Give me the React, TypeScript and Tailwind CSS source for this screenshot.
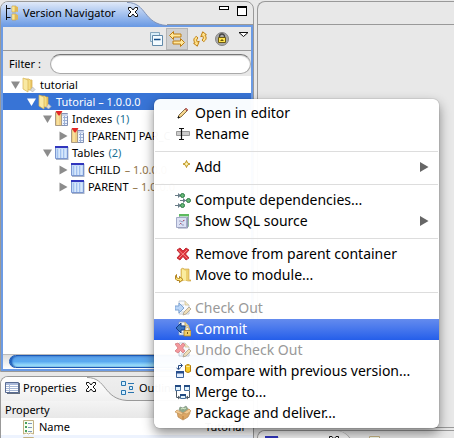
import React from "react";

type IconProps = { className?: string };

function Svg({ children, className = "", size = 16 }: { children: React.ReactNode; className?: string; size?: number }) {
  return (
    <svg width={size} height={size} viewBox="0 0 16 16" fill="none" aria-hidden="true" className={"shrink-0 " + className}>
      {children}
    </svg>
  );
}

const NavigatorIcon = () => (
  <Svg>
    <path d="M1.5 0v15M1.5 3.500h4M1.500 12.500h4" stroke="#111" />
    <path d="M7 1h4v6H7zM7 9h4v6H7z" fill="#f3d774" stroke="#c39a3c" strokeWidth=".6" />
    <path d="M10 1l3 1v5l-3-1zM10 9l3 1v5l-3-1z" fill="#dfb758" />
    <path d="M8 1.500v5M8 9.500v5" stroke="#fff3b8" />
  </Svg>
);

const CloseIcon = ({ className = "" }: IconProps) => (
  <svg width="12" height="12" viewBox="0 0 12 12" aria-hidden="true" className={"shrink-0 " + className}>
    <path d="M1.500 1.500h2.500l2 2.500 2-2.500h2.500v2L8 6l2.500 2.500v2H8L6 8l-2 2.500H1.500v-2L4 6 1.500 3.500z" fill="#fff" stroke="#111" />
  </svg>
);

const FolderIcon = () => (
  <Svg>
    <path d="M2 2h5l1 1h2v10H7l-5-1z" fill="#f5dd83" stroke="#d2a744" strokeWidth=".7" />
    <path d="M1 1l5 2v12l-5-3z" fill="#f9e9a3" stroke="#dab655" strokeWidth=".7" />
    <path d="M8.500 3H10v9H8.500z" fill="#e3bc5a" />
    <path d="M10.500 10l2.500 2.500-2.500 2.500L8.500 13z" fill="#dcdcdc" stroke="#b5b5b5" strokeWidth=".7" />
  </Svg>
);

const TableIcon = () => (
  <Svg>
    <path d="M2 2h12.500v13H2z" fill="#aab4c8" />
    <path d="M1.500 1.500h12v12h-12z" fill="#c3daf8" stroke="#7b96cf" />
    <path d="M1 1h13v2H1z" fill="#3136bd" />
    <path d="M4 4v9M7 4v9M10 4v9" stroke="#7fa8e6" />
    <path d="M5 4v9M8 4v9M11 4v9" stroke="#eef6ff" />
  </Svg>
);

const IndexIcon = () => (
  <Svg>
    <path d="M7 2.500h6.500v12H7z" fill="#edf3fb" stroke="#8492b5" />
    <path d="M7 3h7v2H7z" fill="#c9d3ea" />
    <path d="M9 6.500h4M9 9.500h4M9 12.500h4M10.500 5v9" stroke="#9cb0d6" />
    <path d="M1.500 1.500h6v13h-6z" fill="#efcf86" stroke="#a99a84" />
    <path d="M4 4v10" stroke="#fff0b2" />
    <path d="M1.500 0h7L5.500 4.500h-1z" fill="#e52626" />
  </Svg>
);

const PencilIcon = () => (
  <Svg>
    <path d="M3 13l1-3 6-6 2 2-6 6z" fill="#efc97b" stroke="#6c5530" strokeWidth=".8" />
    <path d="M10 4l1-1 2 2-1 1z" fill="#d95e58" stroke="#913e3e" strokeWidth=".6" />
    <path d="M3 13l.5-1.500 1 1z" fill="#111" stroke="#111" />
    <path d="M5 10.500l6-6" stroke="#fff1ba" strokeWidth=".8" />
  </Svg>
);

const RenameIcon = () => (
  <Svg>
    <path d="M1.500 5.500h13v4h-13z" fill="#ccc" stroke="#999" />
    <path d="M4 2.500h2M9 2.500H6.500v11H9M4 13.500h2.500" stroke="#111" strokeWidth="1.200" />
  </Svg>
);

const AddIcon = () => (
  <Svg>
    <path d="M11.500 1.500L12.500 4l2.500 1-2.500 1-1 2.500-1-2.500L8 5l2.500-1z" fill="#fff7b0" stroke="#b88a14" strokeWidth=".9" />
  </Svg>
);

const DependenciesIcon = () => (
  <Svg>
    <path d="M0 3.500h9M0 13.500h9M5 8.500h6" stroke="#697d88" />
    <path d="M3 1l3 2.500L3 6zM3 11l3 2.500L3 16zM8 6l3 2.500L8 11z" fill="#667b86" />
    <circle cx="7.500" cy="3.500" r="2" fill="#67b878" stroke="#2b7944" />
    <circle cx="7.500" cy="13.500" r="2" fill="#67b878" stroke="#2b7944" />
    <circle cx="13.500" cy="8.500" r="2" fill="#67b878" stroke="#2b7944" />
  </Svg>
);

const SqlIcon = () => (
  <Svg>
    <path d="M4.500 1.500h9v12h-9z" fill="#b7d9c4" stroke="#8fb9a2" />
    <path d="M4 1h10v2H4z" fill="#5dbb5f" />
    <path d="M1.500 4.500h10v10h-10z" fill="#dce1f4" stroke="#a3aac8" />
    <path d="M12.500 4v11H3" stroke="#9299b5" />
    <path d="M4 8h2l1 1 3-2M4 12l2-2 1 2h2" stroke="#8b91b5" strokeWidth=".8" />
    <path d="M8 7h1v1H8zM5 10h1v1H5z" fill="#bd5365" />
  </Svg>
);

const RemoveIcon = () => (
  <Svg>
    <path d="M2 4l3-2 3 3 3-3 3 2-3.500 4L14 12l-3 2-3-3.500L5 14l-3-2 3.500-4z" fill="#df3038" stroke="#b31722" strokeWidth=".8" />
    <path d="M3.500 4l9 8.500M12 4l-8 8" stroke="#f58683" />
  </Svg>
);

const MoveIcon = () => (
  <Svg>
    <path d="M6 2l2-1 1 1h5v11h2v1h-3l-3-1-4 1z" fill="#edd06f" stroke="#cba03d" strokeWidth=".6" />
    <path d="M7 2l4 2v10l-4-1z" fill="#faec9f" />
    <path d="M1.500 7.500v3l2 1H4.500v-2l3.500 3-3.500 3v-2H2L.5 12V9z" fill="#ffe778" stroke="#ad7b14" strokeWidth=".9" />
  </Svg>
);

function DocBase() {
  return (
    <>
      <path d="M4 1h6l4 4v9H4z" fill="#f6f8fc" stroke="#8697b3" strokeWidth=".8" />
      <path d="M10 1v4h4" fill="#ead99f" stroke="#b69a52" strokeWidth=".8" />
      <path d="M6 5h3M6 12h5" stroke="#a4b5d0" />
    </>
  );
}

const CheckOutIcon = () => (
  <Svg className="opacity-60">
    <DocBase />
    <path d="M0 6h4V3l5 5-5 5v-3H0z" fill="#8ebcf4" stroke="#2868b7" />
    <path d="M8 15l1-3 5-5 2 2-5 5z" fill="#e9ca8c" stroke="#76613d" strokeWidth=".8" />
  </Svg>
);

const CommitIcon = () => (
  <Svg>
    <DocBase />
    <path d="M10 5H6V2L1 7l5 5V9h4z" fill="#3974c1" stroke="#143c87" />
    <path d="M10.500 10V8.500a2 2 0 0 1 4 0V10" stroke="#d9bb72" strokeWidth="1.200" />
    <path d="M9 9.500h7V15H9z" fill="#f1cd68" stroke="#a67b22" strokeWidth=".8" />
    <path d="M12.500 11v2" stroke="#735519" />
  </Svg>
);

const UndoIcon = () => (
  <Svg className="opacity-60">
    <DocBase />
    <path d="M0 2l3-1 2.500 2.500L8 1l2 2-2.500 3L10 9l-2 2-2.500-2.500L3 11 0 9l3-3z" fill="#ed555c" stroke="#b52630" strokeWidth=".8" />
    <path d="M8 15l1-3 5-5 2 2-5 5z" fill="#e9ca8c" stroke="#76613d" strokeWidth=".8" />
  </Svg>
);

const CompareIcon = () => (
  <Svg>
    <path d="M3.500 6V2.500H7M5.500 .5l2 2-2 2M1.500 5l2 1.500 2-1.500" stroke="#234781" />
    <path d="M1.500 8.500h7v6h-7z" fill="#e3efff" stroke="#3c6298" />
    <path d="M1 8h8v2.500H1z" fill="#264d8d" />
    <path d="M10.500 2.500v6q2.500 2 5 0v-6q-2.500-2-5 0" fill="#f7c928" stroke="#b47e0a" />
    <path d="M11 3q2 1.500 4 0" stroke="#fff0a0" />
  </Svg>
);

const MergeIcon = () => (
  <Svg>
    <path d="M.5 1.500h5v5h-5zM9.500 1.500h5v5h-5zM5.500 10.500h5v4h-5z" fill="#e1f2fb" stroke="#466d9b" />
    <path d="M0 1h6v2H0zM9 1h6v2H9zM5 10h6v2H5z" fill="#234b83" />
    <path d="M1.500 7v6.500h3M14.500 7v6.500H12M3 12l2 1.500L3 15M13 12l-2 1.500L13 15" stroke="#4b5865" />
  </Svg>
);

const PackageIcon = () => (
  <Svg>
    <path d="M2 6l6 2 6-4 1 4-2 4-5 3-5-3z" fill="#dda765" stroke="#b5844c" strokeWidth=".7" />
    <path d="M4 5l1-3 3 1 3-2 2 3-5 4z" fill="#8fa98b" stroke="#839582" strokeWidth=".7" />
    <path d="M6 4l2-1 1 1 2-1" stroke="#d6e9c8" />
    <path d="M2 5L0 7l7 3 1-2 4 1 4-3-2-2-6 4z" fill="#f1ca92" stroke="#c4955a" strokeWidth=".7" />
    <path d="M8 11v3" stroke="#b77c3d" />
  </Svg>
);

const CollapseIcon = () => (
  <Svg>
    <path d="M2.500 1.500h9v9h-9z" fill="#d8edf8" stroke="#86a7bd" />
    <path d="M4.500 4.500h10v10h-10z" fill="#f3fbff" stroke="#6189a8" />
    <path d="M6 8.500h6.500" stroke="#124b86" strokeWidth="1.500" />
  </Svg>
);

const LinkIcon = () => (
  <Svg>
    <path d="M.5 4.500L4.500.5v2.500H12v3H4.500v2.500zM15.500 11.500l-4-4V10H4v3h7.500v2.500z" fill="#ffe79a" stroke="#bd7d13" />
  </Svg>
);

const RefreshIcon = () => (
  <Svg>
    <path d="M9 8.500c2-.5 2.500-2 2-3.500L9 5l3.500-4L15 5h-1.500c1 3-.5 5-3.500 5.500z" transform="rotate(-20 11 6)" fill="#ffe28a" stroke="#bd7d13" strokeWidth=".9" />
    <path d="M7 7.500c-2 .5-2.500 2-2 3.500l2 0-3.500 4L1 11h1.500c-1-3 .5-5 3.500-5.500z" transform="rotate(-20 5 10)" fill="#ffe28a" stroke="#bd7d13" strokeWidth=".9" />
  </Svg>
);

const LockIcon = () => (
  <Svg>
    <circle cx="8" cy="8" r="6.500" fill="#a8a8a8" stroke="#858585" />
    <path d="M5.500 7V5.500a2.500 2.500 0 0 1 5 0V7" stroke="#444" strokeWidth="1.300" />
    <path d="M4.500 6.500h7v5h-7z" fill="#ffe34e" stroke="#6c5b14" />
    <path d="M8 8v2M6.500 9.500h3" stroke="#65530c" />
  </Svg>
);

const PropertiesIcon = () => (
  <Svg>
    <path d="M2 3h13v11H2z" fill="#666f7f" />
    <path d="M.5 2.500h13v10H.5z" fill="#fff" stroke="#596c93" />
    <path d="M1 3h12v2H1z" fill="#a9b9da" />
    <path d="M1 6.500h12M1 8.500h12M1 10.500h12M4.500 5v7" stroke="#a7b8d7" />
  </Svg>
);

const OutlineIcon = () => (
  <Svg>
    <path d="M.5 1.500h4v4h-4zM.5 10.500h4v4h-4zM8.500 6.500h3v3h-3z" fill="#d6f0ff" stroke="#2874ae" />
    <path d="M7 3.500h6M7 12.500h6" stroke="#2874ae" />
  </Svg>
);

const PropertyIcon = () => (
  <Svg>
    <path d="M2.500 1.500h10v13.500l-3-1-2 1-2-1-3 1z" fill="#f7fff5" stroke="#c3b183" />
    <path d="M4 3h2v2H4zM4 7h2v2H4zM4 11h2v2H4z" fill="#4ba05d" />
    <path d="M7 4.500h4M7 8.500h4M7 12.500h4" stroke="#8296bd" />
  </Svg>
);

function TabCurve({ id, from, to, line }: { id: string; from: string; to: string; line: string }) {
  return (
    <svg width="40" height="24" viewBox="0 0 40 24" aria-hidden="true" className="shrink-0">
      <defs>
        <linearGradient id={id} x2="0" y2="1">
          <stop stopColor={from} />
          <stop offset="1" stopColor={to} />
        </linearGradient>
      </defs>
      <path d="M0 0C20 0 16 22 40 23.500V24H0z" fill={"url(#" + id + ")"} />
      <path d="M0 .5C20 .5 16 22 40 23.500" fill="none" stroke={line} />
    </svg>
  );
}

type Row = {
  label: string;
  suffix?: string;
  tone?: string;
  pad: string;
  open: boolean;
  icon: React.ReactNode;
  selected?: boolean;
};

const rows: Row[] = [
  { label: "tutorial", pad: "pl-2", open: true, icon: <FolderIcon /> },
  { label: "Tutorial – 1.0.0.0", pad: "pl-6", open: true, icon: <FolderIcon />, selected: true },
  { label: "Indexes", suffix: "(1)", tone: "text-[#1c7195]", pad: "pl-10", open: true, icon: <IndexIcon /> },
  { label: "[PARENT] PAR_C", pad: "pl-14", open: false, icon: <IndexIcon /> },
  { label: "Tables", suffix: "(2)", tone: "text-[#1c7195]", pad: "pl-10", open: true, icon: <TableIcon /> },
  { label: "CHILD", suffix: "– 1.0.0.0", tone: "text-[#917448]", pad: "pl-14", open: false, icon: <TableIcon /> },
  { label: "PARENT", suffix: "– 1.0.0.0", tone: "text-[#917448]", pad: "pl-14", open: false, icon: <TableIcon /> },
];

function Twisty({ open, selected }: { open: boolean; selected?: boolean }) {
  return (
    <svg width="9" height="10" viewBox="0 0 9 10" aria-hidden="true" className="shrink-0">
      <path d={open ? "M0 1.500h9L4.500 9z" : "M.5 0.500v9L8.500 5z"} fill={selected ? "#fff" : "#8c8c8c"} />
    </svg>
  );
}

function TreeRow({ row }: { row: Row }) {
  return (
    <li
      role="treeitem"
      aria-selected={!!row.selected}
      className={"flex h-[17px] items-center whitespace-nowrap " + row.pad + (row.selected ? " bg-[#3874d6] text-white" : "")}
    >
      <Twisty open={row.open} selected={row.selected} />
      <span className="ml-0.5 flex">{row.icon}</span>
      <span className="ml-0.5">{row.label}</span>
      {row.suffix && <span className={"ml-1 " + row.tone}>{row.suffix}</span>}
    </li>
  );
}

function Navigator() {
  return (
    <section aria-label="Version Navigator" className="flex min-h-0 flex-1 flex-col overflow-hidden rounded-t-lg border border-[#999]">
      <header className="flex h-[25px] shrink-0 items-start border-b-2 border-[#6c9be4]">
        <div className="flex h-6 w-[126px] shrink-0 items-center whitespace-nowrap bg-linear-to-b from-[#e0e9f8] to-[#6c9be4] pb-0.5 pl-1">
          <NavigatorIcon />
          <h2 className="ml-0.5">Version Navigator</h2>
        </div>
        <div className="relative flex">
          <TabCurve id="navTab" from="#e0e9f8" to="#6c9be4" line="#8294b8" />
          <button type="button" aria-label="Close Version Navigator" className="absolute left-0 top-1">
            <CloseIcon />
          </button>
        </div>
        <div className="flex h-[23px] flex-1 items-start justify-end gap-2 border-b border-[#999] pr-1.5 pt-1">
          <button type="button" aria-label="Minimize" className="h-1 w-2.5 border border-black bg-white" />
          <button type="button" aria-label="Maximize" className="h-2.5 w-2.5 border border-t-2 border-black bg-white" />
        </div>
      </header>
      <div className="flex min-h-0 flex-1 flex-col border-2 border-t-0 border-[#6c9be4]">
        <div className="flex h-6 shrink-0 items-center justify-end border-b border-[#999] pr-0.5">
          <button type="button" aria-label="Collapse all" className="mr-0.5">
            <CollapseIcon />
          </button>
          <button type="button" aria-label="Link with editor" aria-pressed="true" className="border border-[#b5b5b5] bg-[#d0d0d0] px-0.5 py-0.5">
            <LinkIcon />
          </button>
          <button type="button" aria-label="Refresh" className="ml-1">
            <RefreshIcon />
          </button>
          <button type="button" aria-label="Lock" className="ml-1.5">
            <LockIcon />
          </button>
          <button type="button" aria-label="View menu" className="mb-2 ml-2">
            <svg width="11" height="7" viewBox="0 0 11 7" aria-hidden="true">
              <path d="M1 1.500h9L5.500 5.500z" fill="#fff" stroke="#111" />
            </svg>
          </button>
        </div>
        <div className="flex h-[25px] shrink-0 items-center">
          <label htmlFor="filter" className="w-[47px] shrink-0 whitespace-nowrap pl-1.5">
            Filter :
          </label>
          <input
            id="filter"
            type="text"
            className="h-5 min-w-0 flex-1 rounded-full border border-[#aaa] border-t-[#777] bg-white px-2 shadow-[inset_0_1px_1px_#ccc] outline-none"
          />
        </div>
        <ul role="tree" aria-label="Versions" className="min-h-0 flex-1 overflow-hidden bg-white">
          {rows.map((row) => (
            <TreeRow key={row.label} row={row} />
          ))}
        </ul>
        <div className="flex h-[15px] shrink-0 border-t border-[#bbb] bg-linear-to-b from-[#ddd] to-white pl-1.5">
          <div className="h-[13px] w-[218px] rounded-full border border-[#1b58b4] bg-linear-to-b from-[#5b9fe8] via-[#5aaaf0] to-[#b5f4ff] shadow-[inset_2px_0_2px_#1b58b4]" />
        </div>
      </div>
    </section>
  );
}

function Properties() {
  return (
    <section aria-label="Properties" className="h-[62px] shrink-0 overflow-hidden rounded-tl-lg border border-b-0 border-[#999]">
      <header className="flex h-6 items-center whitespace-nowrap bg-linear-to-b from-[#eee] to-[#e8e8e8]">
        <div className="flex h-6 w-[86px] shrink-0 items-center bg-linear-to-b from-white to-[#f0f0f0] pb-0.5 pl-1">
          <PropertiesIcon />
          <h2 className="ml-0.5">Properties</h2>
        </div>
        <div className="relative flex">
          <TabCurve id="propTab" from="#ffffff" to="#f0f0f0" line="#999" />
          <button type="button" aria-label="Close Properties" className="absolute -left-0.5 top-1">
            <CloseIcon />
          </button>
        </div>
        <div className="flex h-6 flex-1 items-center gap-0.5 border-b border-[#999] pb-0.5">
          <span className="-ml-1.5 flex">
            <OutlineIcon />
          </span>
          Outline
        </div>
      </header>
      <table className="w-full table-fixed border-collapse text-left">
        <thead className="bg-linear-to-b from-[#f4f4f4] to-[#e8e8e8]">
          <tr className="h-[17px]">
            <th className="w-[200px] p-0 pl-1 font-normal">Property</th>
            <td className="p-0" />
          </tr>
        </thead>
        <tbody className="bg-white">
          <tr className="h-[17px]">
            <td className="p-0 pl-5">
              <span className="flex items-center gap-0.5">
                <PropertyIcon />
                Name
              </span>
            </td>
            <td className="p-0 pl-1">Tutorial</td>
          </tr>
          <tr className="h-[17px] bg-[#edf3fe]">
            <td className="p-0 pl-5">
              <PropertyIcon />
            </td>
            <td />
          </tr>
        </tbody>
      </table>
    </section>
  );
}

type Item = { label: string; icon: React.ReactNode; sub?: boolean; disabled?: boolean; active?: boolean };

const groups: Item[][] = [
  [
    { label: "Open in editor", icon: <PencilIcon /> },
    { label: "Rename", icon: <RenameIcon /> },
  ],
  [{ label: "Add", icon: <AddIcon />, sub: true }],
  [
    { label: "Compute dependencies...", icon: <DependenciesIcon /> },
    { label: "Show SQL source", icon: <SqlIcon />, sub: true },
  ],
  [
    { label: "Remove from parent container", icon: <RemoveIcon /> },
    { label: "Move to module...", icon: <MoveIcon /> },
  ],
  [
    { label: "Check Out", icon: <CheckOutIcon />, disabled: true },
    { label: "Commit", icon: <CommitIcon />, active: true },
    { label: "Undo Check Out", icon: <UndoIcon />, disabled: true },
    { label: "Compare with previous version...", icon: <CompareIcon /> },
    { label: "Merge to...", icon: <MergeIcon /> },
    { label: "Package and deliver...", icon: <PackageIcon /> },
  ],
];

function MenuItem({ item }: { item: Item }) {
  const tone = item.active
    ? " bg-linear-to-b from-[#648bee] to-[#245eea] text-white"
    : item.disabled
      ? " text-[#999]"
      : " text-black";
  return (
    <button
      type="button"
      role="menuitem"
      disabled={item.disabled}
      className={"flex h-[21px] w-full items-center whitespace-nowrap pb-0.5 pl-[21px] pr-2.5 text-left" + tone}
    >
      {item.icon}
      <span className="ml-1 flex-1">{item.label}</span>
      {item.sub && (
        <svg width="9" height="10" viewBox="0 0 9 10" aria-hidden="true">
          <path d="M0 0v10l8.500-5z" fill="#666" />
        </svg>
      )}
    </button>
  );
}

function ContextMenu() {
  return (
    <div
      role="menu"
      aria-label="Version actions"
      className="absolute left-[154px] top-[99px] w-[285px] rounded-md bg-white/97 py-1 font-['Noto_Sans','Open_Sans',sans-serif] text-[14px] leading-5 shadow-[0_5px_12px_rgba(0,0,0,0.45),0_0_1px_rgba(0,0,0,0.6)]"
    >
      {groups.map((group, index) => (
        <div key={index} role="group">
          {index > 0 && (
            <div role="separator" className="flex h-3 items-center px-px">
              <div className="h-px w-full bg-[#ddd]" />
            </div>
          )}
          {group.map((item) => (
            <MenuItem key={item.label} item={item} />
          ))}
        </div>
      ))}
    </div>
  );
}

export default function App() {
  return (
    <main className="relative flex h-screen gap-[3px] overflow-hidden bg-[#e8e8e8] pt-px font-['Noto_Sans','Open_Sans',sans-serif] text-[11px] leading-4 text-black">
      <div className="flex w-[254px] shrink-0 flex-col gap-1">
        <Navigator />
        <Properties />
      </div>
      <div className="flex min-w-0 flex-1 flex-col gap-0.5">
        <section aria-label="Editor" className="flex-1 rounded-tl-lg border border-r-0 border-[#999]">
          <div className="h-[23px] border-b border-[#999]" />
        </section>
        <section aria-label="Console" className="flex h-2 shrink-0 items-start overflow-hidden rounded-tl-lg border border-b-0 border-r-0 border-[#999]">
          <div className="flex h-6 w-[95px] items-start rounded-tr-2xl border-r border-[#999] bg-[#f4f4f4] pl-1.5 pt-1">
            <TableIcon />
            <span className="flex-1" />
            <CloseIcon className="mr-3" />
          </div>
          <span className="pl-3.5 pt-1">
            <PropertyIcon />
          </span>
        </section>
      </div>
      <ContextMenu />
    </main>
  );
}
